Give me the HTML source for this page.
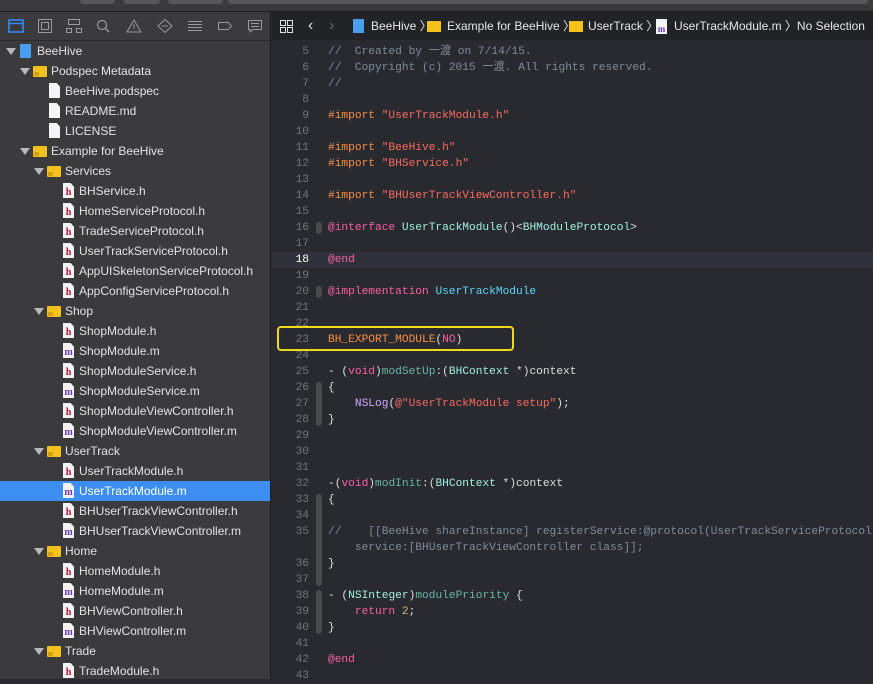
<!DOCTYPE html>
<html><head><meta charset="utf-8"><style>
*{margin:0;padding:0;box-sizing:border-box}
body{width:873px;height:679px;overflow:hidden;background:#292a30;font-family:"Liberation Sans","Noto Sans CJK SC",sans-serif;position:relative}
#top{position:absolute;left:0;top:0;width:873px;height:12px;background:#3a3a3c;border-bottom:1px solid #1c1c1e}
#top div{position:absolute;top:0;height:4px;background:#57575a;border-radius:0 0 4px 4px}
#side{position:absolute;left:0;top:12px;width:271px;height:667px;background:#3b3b3e;border-right:1px solid #1d1d1f}
#icons{height:29px;border-bottom:1px solid #2c2c2e;position:relative}
#icons svg{position:absolute;top:7px}
.row{position:absolute;left:0;width:270px;height:20px;font-size:12px;color:#e2e2e4;line-height:20px;white-space:nowrap}
.row.sel{background:#3d8ef2;color:#fff}
.tri{position:absolute;top:7px;width:0;height:0;border-left:5px solid transparent;border-right:5px solid transparent;border-top:7px solid #b8b8ba}
.fold{position:absolute;top:5px;width:14px;height:11px;background:#f5c21a;border-radius:1px}
.fold:after{content:"";position:absolute;left:1px;bottom:1px;width:5px;height:4px;background:#d9a20c}
.file{position:absolute;top:2px;width:11px;height:15px;background:#f4f4f4;clip-path:polygon(0 0,70% 0,100% 25%,100% 100%,0 100%);font:bold 10px "Liberation Serif",serif;text-align:center;line-height:19px}
.h{color:#c0142c}.m{color:#6a3bb0}
.txt{position:absolute;top:0}
#crumb{position:absolute;left:272px;top:12px;width:601px;height:28px;background:#222327;font-size:12px;color:#e6e6e8;line-height:28px;white-space:nowrap}
#crumb span{position:absolute}
#code{position:absolute;left:272px;top:44px;width:601px;height:635px;font-family:"Liberation Mono",monospace;font-size:11.2px}
.l{position:absolute;left:0;width:601px;height:16px;line-height:16px;white-space:pre;color:#dfdfe0}
.n{position:absolute;left:0;width:37px;text-align:right;color:#747478}
.c{position:absolute;left:56px}
.fb{position:absolute;left:44px;width:6px;background:#4a4a4e;border-radius:3px}
.cm{color:#7f8c98}.kw{color:#fc5fa3}.st{color:#fc6a5d}.pp{color:#fd8f3f}.tl{color:#9ef1dd}.bl{color:#5dd8ff}.mt{color:#67b7a4}.pu{color:#d0a8ff}.nu{color:#d0bf69}
</style></head><body>
<div id="top"><div style="left:80px;width:35px"></div><div style="left:123px;width:37px"></div><div style="left:168px;width:55px"></div><div style="left:228px;width:640px"></div></div>
<div id="side">
<div id="icons">
<svg style="left:8px" width="16" height="14"><rect x="1" y="1" width="14" height="12" fill="none" stroke="#2f8cf7" stroke-width="1.6"/><line x1="1" y1="4.5" x2="15" y2="4.5" stroke="#2f8cf7" stroke-width="1.4"/></svg>
<svg style="left:37px" width="16" height="14"><rect x="1.5" y="0.5" width="13" height="13" fill="none" stroke="#9a9a9d"/><rect x="4.5" y="3.5" width="7" height="7" fill="none" stroke="#9a9a9d"/></svg>
<svg style="left:66px" width="16" height="14"><rect x="2.5" y="0.5" width="11" height="5" fill="none" stroke="#9a9a9d"/><rect x="0.5" y="9.5" width="5" height="4" fill="none" stroke="#9a9a9d"/><rect x="10.5" y="9.5" width="5" height="4" fill="none" stroke="#9a9a9d"/></svg>
<svg style="left:96px" width="16" height="14"><circle cx="6" cy="6" r="4.5" fill="none" stroke="#9a9a9d" stroke-width="1.2"/><line x1="9.5" y1="9.5" x2="13" y2="13" stroke="#9a9a9d" stroke-width="1.4"/></svg>
<svg style="left:126px" width="16" height="14"><path d="M8 1L15 13H1Z" fill="none" stroke="#9a9a9d"/><line x1="8" y1="5" x2="8" y2="10" stroke="#9a9a9d"/></svg>
<svg style="left:157px" width="16" height="14"><path d="M8 0.5L15 7L8 13.5L1 7Z" fill="none" stroke="#9a9a9d"/><line x1="5" y1="7" x2="11" y2="7" stroke="#9a9a9d"/></svg>
<svg style="left:187px" width="16" height="14"><g stroke="#9a9a9d"><line x1="1" y1="2.5" x2="15" y2="2.5"/><line x1="1" y1="5.5" x2="15" y2="5.5"/><line x1="1" y1="8.5" x2="15" y2="8.5"/><line x1="1" y1="11.5" x2="15" y2="11.5"/></g></svg>
<svg style="left:217px" width="16" height="14"><path d="M1.5 3.5H11L14.5 7L11 10.5H1.5Z" fill="none" stroke="#9a9a9d"/></svg>
<svg style="left:247px" width="16" height="14"><path d="M1.5 1.5H14.5V10.5H6L3 13V10.5H1.5Z" fill="none" stroke="#9a9a9d"/><g stroke="#9a9a9d"><line x1="4" y1="4.5" x2="12" y2="4.5"/><line x1="4" y1="7.5" x2="12" y2="7.5"/></g></svg>
</div>
</div>
<div id="rows"></div>
<div id="crumb">
<svg style="position:absolute;left:8px;top:8px" width="13" height="13"><g fill="none" stroke="#e0e0e0"><rect x="0.5" y="0.5" width="5" height="5"/><rect x="7.5" y="0.5" width="5" height="5"/><rect x="0.5" y="7.5" width="5" height="5"/><rect x="7.5" y="7.5" width="5" height="5"/></g></svg>
<span style="left:36px;font-size:16px;color:#e0e0e0">‹</span><span style="left:57px;font-size:16px;color:#6a6a6e">›</span>
<span style="left:81px;top:7px;width:11px;height:14px;background:#4a9ef0;line-height:14px"></span>
<span style="left:99px">BeeHive 〉</span>
<span style="left:155px;top:9px;width:14px;height:11px;background:#f5c21a"></span>
<span style="left:175px">Example for BeeHive 〉</span>
<span style="left:297px;top:9px;width:14px;height:11px;background:#f5c21a"></span>
<span style="left:316px">UserTrack 〉</span>
<span style="left:384px;top:7px;width:11px;height:15px;background:#f2f2f2;color:#6a3bb0;font:bold 9px serif;line-height:20px;text-align:center">m</span>
<span style="left:402px">UserTrackModule.m 〉No Selection</span>
</div>
<div id="code"></div>
<script>
var rows=[[0,"BeeHive","proj",1],[1,"Podspec Metadata","f",1],[2,"BeeHive.podspec","w"],[2,"README.md","w"],[2,"LICENSE","w"],[1,"Example for BeeHive","f",1],[2,"Services","f",1],[3,"BHService.h","h"],[3,"HomeServiceProtocol.h","h"],[3,"TradeServiceProtocol.h","h"],[3,"UserTrackServiceProtocol.h","h"],[3,"AppUISkeletonServiceProtocol.h","h"],[3,"AppConfigServiceProtocol.h","h"],[2,"Shop","f",1],[3,"ShopModule.h","h"],[3,"ShopModule.m","m"],[3,"ShopModuleService.h","h"],[3,"ShopModuleService.m","m"],[3,"ShopModuleViewController.h","h"],[3,"ShopModuleViewController.m","m"],[2,"UserTrack","f",1],[3,"UserTrackModule.h","h"],[3,"UserTrackModule.m","m"],[3,"BHUserTrackViewController.h","h"],[3,"BHUserTrackViewController.m","m"],[2,"Home","f",1],[3,"HomeModule.h","h"],[3,"HomeModule.m","m"],[3,"BHViewController.h","h"],[3,"BHViewController.m","m"],[2,"Trade","f",1],[3,"TradeModule.h","h"]];
var h="";rows.forEach(function(r,i){var lv=r[0],y=41+i*20,tx=37+lv*14,ix=tx-16;
var s='<div class="row'+(i==22?' sel':'')+'" style="top:'+y+'px">';
if(r[3])s+='<div class="tri" style="left:'+(6+lv*14)+'px"></div>';
if(r[2]=="f")s+='<div class="fold" style="left:'+(ix-2)+'px"></div>';
else if(r[2]=="proj")s+='<div style="position:absolute;left:20px;top:3px;width:11px;height:14px;background:#4a9ef0"></div>';
else s+='<div class="file '+(r[2]=="w"?"":r[2])+'" style="left:'+ix+'px">'+(r[2]=="w"?"":r[2])+'</div>';
s+='<span class="txt" style="left:'+tx+'px">'+r[1]+'</span></div>';h+=s;});
document.getElementById("rows").outerHTML='<div style="position:absolute;left:0;top:0">'+h+'</div>';
var L={5:'<span class="cm">//  Created by 一渡 on 7/14/15.</span>',6:'<span class="cm">//  Copyright (c) 2015 一渡. All rights reserved.</span>',7:'<span class="cm">//</span>',
9:'<span class="pp">#import </span><span class="st">"UserTrackModule.h"</span>',11:'<span class="pp">#import </span><span class="st">"BeeHive.h"</span>',12:'<span class="pp">#import </span><span class="st">"BHService.h"</span>',14:'<span class="pp">#import </span><span class="st">"BHUserTrackViewController.h"</span>',
16:'<span class="kw">@interface</span> <span class="tl">UserTrackModule</span>()&lt;<span class="tl">BHModuleProtocol</span>&gt;',18:'<span class="kw">@end</span>',20:'<span class="kw">@implementation</span> <span class="bl">UserTrackModule</span>',
23:'<span class="pp">BH_EXPORT_MODULE</span>(<span class="kw">NO</span>)',25:'- (<span class="kw">void</span>)<span class="mt">modSetUp</span>:(<span class="tl">BHContext</span> *)context',26:'{',27:'    <span class="pu">NSLog</span>(<span class="st">@"UserTrackModule setup"</span>);',28:'}',
32:'-(<span class="kw">void</span>)<span class="mt">modInit</span>:(<span class="tl">BHContext</span> *)context',33:'{',35:'<span class="cm">//    [[BeeHive shareInstance] registerService:@protocol(UserTrackServiceProtocol)</span>',36:'}',
38:'- (<span class="tl">NSInteger</span>)<span class="mt">modulePriority</span> {',39:'    <span class="kw">return</span> <span class="nu">2</span>;',40:'}',42:'<span class="kw">@end</span>'};
var c='<div style="position:absolute;left:0;top:208px;width:601px;height:16px;background:#2f3239"></div>';
[[16,1],[20,1],[26,3],[33,5],[38,3]].forEach(function(f){var y=(f[0]-5)*16+(f[0]>35?16:0);c+='<div class="fb" style="top:'+(y+2)+'px;height:'+(f[1]*16-4+(f[0]==33?16:0))+'px"></div>';});
for(var n=5;n<=43;n++){var y=(n-5)*16+(n>35?16:0);c+='<div class="l" style="top:'+y+'px"><span class="n"'+(n==18?' style="color:#fff"':'')+'>'+n+'</span><span class="c">'+(L[n]||'')+'</span></div>';}
c+='<div class="l" style="top:496px"><span class="c cm">    service:[BHUserTrackViewController class]];</span></div>';
c+='<div style="position:absolute;left:5px;top:282px;width:237px;height:25px;border:2px solid #f0d81c;border-radius:4px"></div>';
document.getElementById("code").innerHTML=c;
</script>
</body></html>
